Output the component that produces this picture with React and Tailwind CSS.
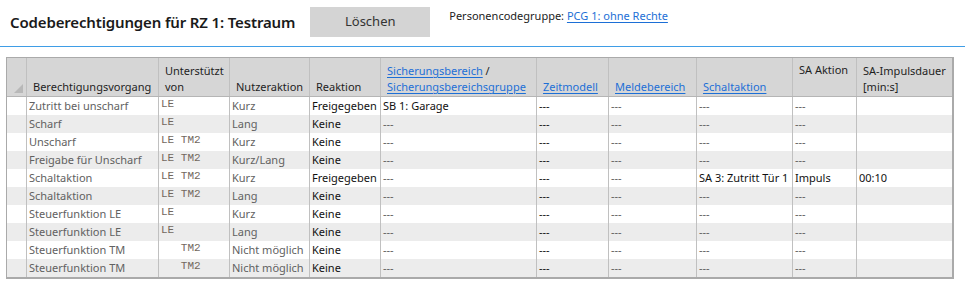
const font = "font-['Noto_Sans','Open_Sans',sans-serif]"

const cols =
  'grid grid-cols-[20px_132px_71px_80px_71px_156px_72px_88px_96px_64px_95px]'

const rows = [
  ['Zutritt bei unscharf', 'LE', 'Kurz', 'Freigegeben', 'SB 1: Garage', '', '', '', '', ''],
  ['Scharf', 'LE', 'Lang', 'Keine', '', '', '', '', '', ''],
  ['Unscharf', 'LE TM2', 'Kurz', 'Keine', '', '', '', '', '', ''],
  ['Freigabe für Unscharf', 'LE TM2', 'Kurz/Lang', 'Keine', '', '', '', '', '', ''],
  ['Schaltaktion', 'LE TM2', 'Kurz', 'Freigegeben', '', '', '', 'SA 3: Zutritt Tür 1', 'Impuls', '00:10'],
  ['Schaltaktion', 'LE TM2', 'Lang', 'Keine', '', '', '', '', '', ''],
  ['Steuerfunktion LE', 'LE', 'Kurz', 'Keine', '', '', '', '', '', ''],
  ['Steuerfunktion LE', 'LE', 'Lang', 'Keine', '', '', '', '', '', ''],
  ['Steuerfunktion TM', '   TM2', 'Nicht möglich', 'Keine', '', '', '', '', '', ''],
  ['Steuerfunktion TM', '   TM2', 'Nicht möglich', 'Keine', '', '', '', '', '', ''],
]

function Link({ children }) {
  return <a href="#" className="text-[#1c6fd6] underline underline-offset-2">{children}</a>
}

function HeadCell({ children, top, last }) {
  return (
    <div
      className={`flex flex-col px-[6px] text-[11px] leading-[16px] text-[#1e1e1e] ${
        top ? 'justify-start pt-[4px]' : 'justify-end pb-[1px]'
      } ${last ? '' : 'border-r border-[#c0c0c0]'}`}
    >
      {children}
    </div>
  )
}

function Cell({ children, dark, last }) {
  return (
    <div
      className={`h-[18px] overflow-hidden whitespace-nowrap pl-[2px] text-[11px] leading-[18px] ${
        dark ? 'text-[#111]' : 'text-[#616161]'
      } ${last ? '' : 'border-r border-[#c0c0c0]'}`}
    >
      {children}
    </div>
  )
}

export default function App() {
  return (
    <div className={`${font} w-[965px] h-[287px] bg-white`}>
      <div className="h-[47px] border-b border-[#3f9de6] flex items-start pl-[10px] pt-[7px]">
        <h1 className="mt-[4px] text-[15px] font-semibold leading-[22px] tracking-[-0.15px] text-[#1a1a1a]">
          Codeberechtigungen für RZ 1: Testraum
        </h1>
        <button className="ml-[15px] h-[30px] w-[120px] bg-[#d4d4d4] text-[13px] text-[#333]">
          Löschen
        </button>
        <div className="ml-[19px] mt-[1px] text-[11px] leading-[16px] text-[#222]">
          Personencodegruppe: <Link>PCG 1: ohne Rechte</Link>
        </div>
      </div>

      <div className="ml-[6px] mt-[10px] w-[948px] border-l border-t border-r-2 border-b-2 border-[#aaaaaa]">
        <div className={`${cols} h-[39px] bg-[#d6d6d6] border-b border-[#b5b5b5]`}>
          <div className="relative border-r border-[#c0c0c0]">
            <svg className="absolute right-[3px] bottom-[3px]" width="9" height="9" viewBox="0 0 9 9">
              <polygon points="9,0 9,9 0,9" fill="#b8b8b8" />
            </svg>
          </div>
          <HeadCell>Berechtigungsvorgang</HeadCell>
          <HeadCell>
            <span>Unterstützt</span>
            <span>von</span>
          </HeadCell>
          <HeadCell>Nutzeraktion</HeadCell>
          <HeadCell>Reaktion</HeadCell>
          <HeadCell>
            <span className="whitespace-nowrap">
              <Link>Sicherungsbereich</Link> /
            </span>
            <span className="whitespace-nowrap">
              <Link>Sicherungsbereichsgruppe</Link>
            </span>
          </HeadCell>
          <HeadCell>
            <Link>Zeitmodell</Link>
          </HeadCell>
          <HeadCell>
            <Link>Meldebereich</Link>
          </HeadCell>
          <HeadCell>
            <Link>Schaltaktion</Link>
          </HeadCell>
          <HeadCell top>
            <span className="whitespace-nowrap">SA Aktion</span>
          </HeadCell>
          <HeadCell last>
            <span className="whitespace-nowrap">SA-Impulsdauer</span>
            <span>[min:s]</span>
          </HeadCell>
        </div>

        {rows.map((r, i) => (
          <div key={i} className={`${cols} ${i % 2 ? 'bg-[#ececec]' : 'bg-white'}`}>
            <div className="h-[18px] border-r border-[#c0c0c0]" />
            <Cell>{r[0]}</Cell>
            <div className="h-[18px] border-r border-[#c0c0c0] pl-[2px] pt-[1px]">
              <span className="block whitespace-pre font-['Liberation_Mono',monospace] text-[11px] leading-[12px] text-[#72685e]">
                {r[1]}
              </span>
            </div>
            <Cell>{r[2]}</Cell>
            <Cell dark>{r[3]}</Cell>
            <Cell dark={!!r[4]}>{r[4] || '---'}</Cell>
            <Cell dark>---</Cell>
            <Cell>---</Cell>
            <Cell dark={!!r[7]}>{r[7] || '---'}</Cell>
            <Cell dark={!!r[8]}>{r[8] || '---'}</Cell>
            <Cell dark last>{r[9]}</Cell>
          </div>
        ))}
      </div>
    </div>
  )
}
